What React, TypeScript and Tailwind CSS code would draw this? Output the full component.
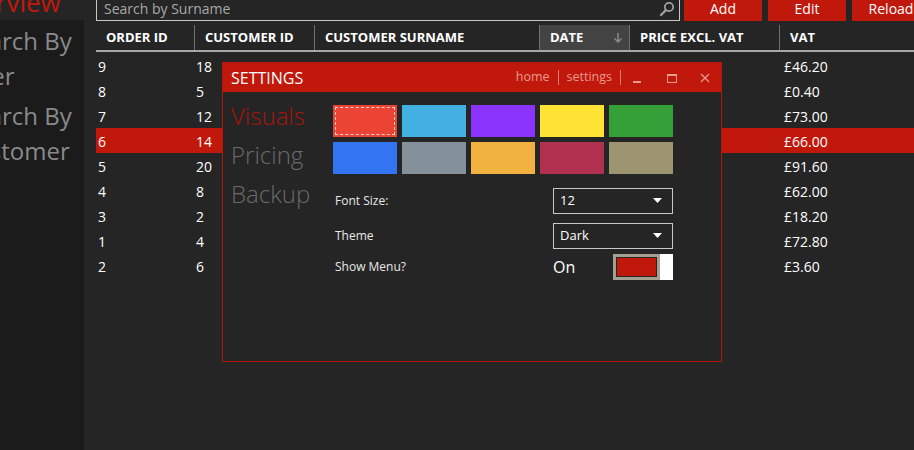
import React from "react";

const rows = [
  { id: "9", cust: "18", vat: "£46.20" },
  { id: "8", cust: "5", vat: "£0.40" },
  { id: "7", cust: "12", vat: "£73.00" },
  { id: "6", cust: "14", vat: "£66.00" },
  { id: "5", cust: "20", vat: "£91.60" },
  { id: "4", cust: "8", vat: "£62.00" },
  { id: "3", cust: "2", vat: "£18.20" },
  { id: "1", cust: "4", vat: "£72.80" },
  { id: "2", cust: "6", vat: "£3.60" },
];

const swatches = [
  "bg-[#ec4434]",
  "bg-[#42b0e0]",
  "bg-[#8a33fb]",
  "bg-[#fee334]",
  "bg-[#34a037]",
  "bg-[#3375f0]",
  "bg-[#84919b]",
  "bg-[#f1b23f]",
  "bg-[#b33150]",
  "bg-[#9d9470]",
];

function Caret() {
  return (
    <svg width="9" height="5" viewBox="0 0 9 5" className="fill-white">
      <path d="M0 0h9L4.5 5z" />
    </svg>
  );
}

function Dropdown({ value }: { value: string }) {
  return (
    <div className="flex h-[26px] w-[120px] items-center justify-between border border-[#c8c8c8] pl-[6px] pr-[10px] text-[13px] text-white">
      <span>{value}</span>
      <Caret />
    </div>
  );
}

function SettingsDialog() {
  return (
    <div className="absolute left-[222px] top-[62px] flex h-[300px] w-[500px] flex-col border border-[#b3160b] bg-[#252525]">
      <div className="flex h-[29px] shrink-0 items-center bg-[#c0180b] pl-[8px] text-[#e99a92]">
        <span className="flex-1 text-[16px] text-white">SETTINGS</span>
        <span className="text-[12.5px]">home</span>
        <span className="mx-[8px] h-[15px] w-px bg-[#e07a70]" />
        <span className="text-[12.5px]">settings</span>
        <span className="mx-[8px] h-[15px] w-px bg-[#e07a70]" />
        <div className="flex items-center">
          <svg width="26" height="14" viewBox="0 0 26 14">
            <rect x="4" y="10" width="8" height="2" fill="#e99a92" />
          </svg>
          <svg width="34" height="14" viewBox="0 0 34 14">
            <rect x="12.5" y="3.5" width="9" height="8" fill="none" stroke="#e99a92" />
            <rect x="12" y="3" width="10" height="2" fill="#e99a92" />
          </svg>
          <svg width="32" height="14" viewBox="0 0 32 14">
            <path d="M12 3l8 8M20 3l-8 8" stroke="#e99a92" strokeWidth="1.3" />
          </svg>
        </div>
      </div>
      <div className="flex flex-1 pt-[10px]">
        <div className="-mt-[6px] flex w-[110px] flex-col pl-[8px] text-[24px] font-light leading-[39px]">
          <span className="text-[#a8150a]">Visuals</span>
          <span className="text-[#6a6a6a]">Pricing</span>
          <span className="text-[#6a6a6a]">Backup</span>
        </div>
        <div className="flex flex-col pt-[3px]">
          <div className="grid grid-cols-[repeat(5,64px)] gap-[5px]">
            {swatches.map((c, i) => (
              <div key={c} className={`h-[32px] ${c} p-[2px]`}>
                {i === 0 && <div className="h-full w-full border border-dashed border-[#f0d0cc]" />}
              </div>
            ))}
          </div>
          <div className="mt-[14px] flex flex-col text-[12px] text-[#e8e8e8]">
            <div className="flex h-[25px] items-center justify-between">
              <span className="pl-[2px]">Font Size:</span>
              <Dropdown value="12" />
            </div>
            <div className="mt-[10px] flex h-[25px] items-center justify-between">
              <span className="pl-[2px]">Theme</span>
              <Dropdown value="Dark" />
            </div>
            <div className="mt-[6px] flex h-[25px] items-center">
              <span className="w-[220px] pl-[2px]">Show Menu?</span>
              <span className="w-[60px] text-[16px] text-white">On</span>
              <div className="flex h-[26px] w-[60px]">
                <div className="flex-1 border-[3px] border-[#a59f92] p-px">
                  <div className="h-full w-full bg-[#c0180b]" />
                </div>
                <div className="w-[13px] bg-white" />
              </div>
            </div>
          </div>
        </div>
      </div>
    </div>
  );
}

export default function App() {
  return (
    <div
      className="relative flex h-[450px] w-[914px] overflow-hidden bg-[#252525] text-white"
      style={{ fontFamily: '"Open Sans", "Noto Sans", sans-serif' }}
    >
      {/* left menu */}
      <div className="flex w-[84px] shrink-0 flex-col overflow-hidden">
        <div className="-mt-[16px] -ml-[52px] h-[36px] whitespace-nowrap text-[26px] leading-[36px] text-[#c0180b]">Overview</div>
        <div className="flex flex-1 flex-col gap-[5px] whitespace-nowrap bg-[#1b1b1b] pt-[3px] text-[24px] leading-[35px] text-[#8a8a8a]">
          <div className="-ml-[38px]">
            <div>Search By</div>
            <div className="-ml-[14px]">Order</div>
          </div>
          <div className="-ml-[38px]">
            <div>Search By</div>
            <div className="-ml-[2px]">Customer</div>
          </div>
        </div>
      </div>

      {/* main */}
      <div className="flex flex-1 flex-col pl-[12px]">
        <div className="-mt-[4px] flex h-[25px] items-stretch">
          <div className="flex w-[584px] items-center justify-between border border-[#c8c8c8] pl-[7px] pr-[4px] text-[14px] text-[#a8a8a8]">
            <span>Search by Surname</span>
            <svg width="16" height="16" viewBox="0 0 16 16">
              <circle cx="10" cy="6" r="4.2" fill="none" stroke="#a0a0a0" strokeWidth="1.8" />
              <path d="M7 9l-5 5" stroke="#a0a0a0" strokeWidth="2.4" strokeLinecap="round" />
            </svg>
          </div>
          <button className="ml-[4px] w-[78px] bg-[#c0180b] text-[14px] text-white">Add</button>
          <button className="ml-[6px] w-[78px] bg-[#c0180b] text-[14px] text-white">Edit</button>
          <button className="ml-[6px] w-[78px] bg-[#c0180b] text-[14px] text-white">Reload</button>
        </div>

        <div className="mt-[4px] flex h-[27px] items-stretch border-b-2 border-[#a8a8a8] text-[13px] font-bold">
          <div className="flex w-[99px] items-center border-r border-[#707070] pl-[10px]">ORDER ID</div>
          <div className="flex w-[120px] items-center border-r border-[#707070] pl-[10px]">CUSTOMER ID</div>
          <div className="flex w-[225px] items-center border-r border-[#707070] pl-[10px]">CUSTOMER SURNAME</div>
          <div className="flex w-[90px] items-center justify-between border-r border-[#707070] bg-[#434343] pl-[10px] pr-[6px]">
            DATE
            <svg width="10" height="12" viewBox="0 0 10 12">
              <path d="M5 1v9M1.5 6.5L5 10l3.5-3.5" stroke="#8a8a8a" strokeWidth="1.5" fill="none" />
            </svg>
          </div>
          <div className="flex w-[150px] items-center border-r border-[#707070] pl-[10px]">PRICE EXCL. VAT</div>
          <div className="flex flex-1 items-center pl-[10px]">VAT</div>
        </div>

        <div className="mt-px flex flex-col text-[14px]">
          {rows.map((r) => (
            <div
              key={r.id}
              className={`flex h-[25px] items-center pt-[2px] ${r.id === "6" ? "bg-[#c0180b]" : ""}`}
            >
              <span className="w-[100px] pl-[2px]">{r.id}</span>
              <span className="w-[588px]">{r.cust}</span>
              <span>{r.vat}</span>
            </div>
          ))}
        </div>
      </div>

      <SettingsDialog />
    </div>
  );
}
